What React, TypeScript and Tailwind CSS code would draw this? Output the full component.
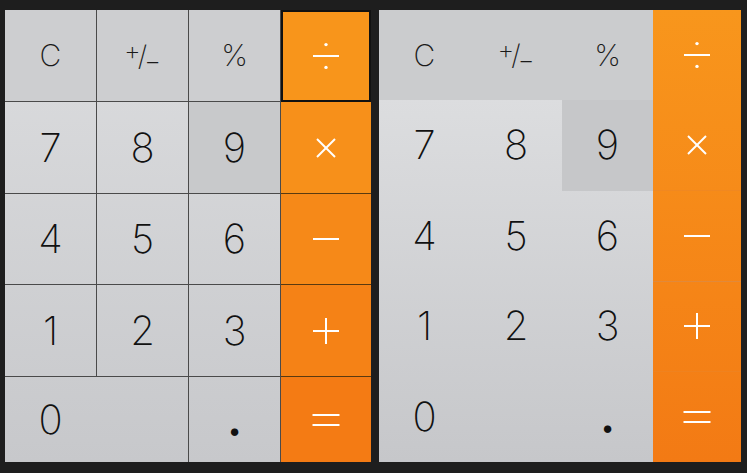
import React from "react";

type OpKind = "div" | "mul" | "sub" | "add" | "eq";

function Op({ kind }: { kind: OpKind }) {
  return (
    <svg width="30" height="30" viewBox="0 0 30 30" stroke="white" strokeWidth="2" fill="white">
      {kind === "div" && (
        <>
          <line x1="2" y1="15" x2="28" y2="15" />
          <circle cx="15" cy="3.6" r="1.7" stroke="none" />
          <circle cx="15" cy="26.4" r="1.7" stroke="none" />
        </>
      )}
      {kind === "mul" && (
        <>
          <line x1="6" y1="6" x2="24" y2="24" />
          <line x1="24" y1="6" x2="6" y2="24" />
        </>
      )}
      {kind === "sub" && <line x1="2" y1="15" x2="28" y2="15" />}
      {kind === "add" && (
        <>
          <line x1="2" y1="15" x2="28" y2="15" />
          <line x1="15" y1="2" x2="15" y2="28" />
        </>
      )}
      {kind === "eq" && (
        <>
          <line x1="1.5" y1="10" x2="28.5" y2="10" />
          <line x1="1.5" y1="20" x2="28.5" y2="20" />
        </>
      )}
    </svg>
  );
}

function PlusMinus() {
  return (
    <span className="inline-flex items-center text-[26px] font-extralight leading-none">
      <span className="relative -top-[5px]">+</span>
      <span className="-mx-[3px] text-[28px]">/</span>
      <span className="relative top-[5px]">−</span>
    </span>
  );
}

const digit = "flex items-center justify-center text-[40px] font-extralight text-[#111]";
const fn = "flex items-center justify-center text-[30px] font-extralight text-[#1a1a1a]";
const line = "border-r border-b border-[#4a4a4a]";
const dot = "text-[44px] font-bold leading-none text-[#111]";

export default function App() {
  return (
    <div className="flex h-[473px] w-[747px] gap-2 bg-[#1e1e1e] pl-[5px] pt-[10px] font-['Inter','Liberation_Sans',sans-serif]">
      {/* left: pressed keys with grid lines */}
      <div className="grid h-[452px] w-[366px] grid-cols-[92px_92px_92px_1fr] grid-rows-[92px_92px_91px_92px_1fr] bg-gradient-to-b from-[#dcdddf] to-[#c7c8cb]">
        <div className={`${fn} ${line} bg-[#cdced0]`}>C</div>
        <div className={`${fn} ${line} bg-[#cdced0]`}>
          <PlusMinus />
        </div>
        <div className={`${fn} ${line} bg-[#cdced0] text-[28px]`}>%</div>
        <div className="flex items-center justify-center border-2 border-[#111] bg-[#f8951b]">
          <Op kind="div" />
        </div>

        <div className={`${digit} ${line}`}>7</div>
        <div className={`${digit} ${line}`}>8</div>
        <div className={`${digit} ${line} bg-[#c8c9cb]`}>9</div>
        <div className="flex items-center justify-center border-b border-[#5a3a10] bg-[#f7901a]">
          <Op kind="mul" />
        </div>

        <div className={`${digit} ${line}`}>4</div>
        <div className={`${digit} ${line}`}>5</div>
        <div className={`${digit} ${line}`}>6</div>
        <div className="flex items-center justify-center border-b border-[#5a3a10] bg-[#f68918]">
          <Op kind="sub" />
        </div>

        <div className={`${digit} ${line}`}>1</div>
        <div className={`${digit} ${line}`}>2</div>
        <div className={`${digit} ${line}`}>3</div>
        <div className="flex items-center justify-center border-b border-[#5a3a10] bg-[#f58216]">
          <Op kind="add" />
        </div>

        <div className="col-span-2 flex items-center border-r border-[#4a4a4a] text-[40px] font-extralight text-[#111]">
          <span className="w-[91px] text-center">0</span>
        </div>
        <div className="flex items-center justify-center border-r border-[#4a4a4a]">
          <span className={dot}>.</span>
        </div>
        <div className="flex items-center justify-center bg-[#f47b14]">
          <Op kind="eq" />
        </div>
      </div>

      {/* right: same keypad, flat */}
      <div className="flex h-[452px] w-[362px]">
        <div className="flex w-[274px] flex-col">
          <div className="grid h-[90px] grid-cols-[91px_92px_91px] bg-[#cbccce]">
            <div className={fn}>C</div>
            <div className={fn}>
              <PlusMinus />
            </div>
            <div className={`${fn} text-[28px]`}>%</div>
          </div>
          <div className="grid flex-1 grid-cols-[91px_92px_91px] grid-rows-4 bg-gradient-to-b from-[#dcdddf] to-[#c6c7ca]">
            <div className={digit}>7</div>
            <div className={digit}>8</div>
            <div className={`${digit} bg-[#c6c7c9]`}>9</div>
            <div className={digit}>4</div>
            <div className={digit}>5</div>
            <div className={digit}>6</div>
            <div className={digit}>1</div>
            <div className={digit}>2</div>
            <div className={digit}>3</div>
            <div className={digit}>0</div>
            <div />
            <div className="flex items-center justify-center">
              <span className={dot}>.</span>
            </div>
          </div>
        </div>
        <div className="flex flex-1 flex-col bg-gradient-to-b from-[#f8961c] to-[#f37a14]">
          <div className="flex h-[90px] items-center justify-center">
            <Op kind="div" />
          </div>
          <div className="flex flex-1 items-center justify-center border-b border-[#e9852c]/40">
            <Op kind="mul" />
          </div>
          <div className="flex flex-1 items-center justify-center border-b border-[#d98a4a]/70">
            <Op kind="sub" />
          </div>
          <div className="flex flex-1 items-center justify-center border-b border-[#e9852c]/40">
            <Op kind="add" />
          </div>
          <div className="flex flex-1 items-center justify-center">
            <Op kind="eq" />
          </div>
        </div>
      </div>
    </div>
  );
}
